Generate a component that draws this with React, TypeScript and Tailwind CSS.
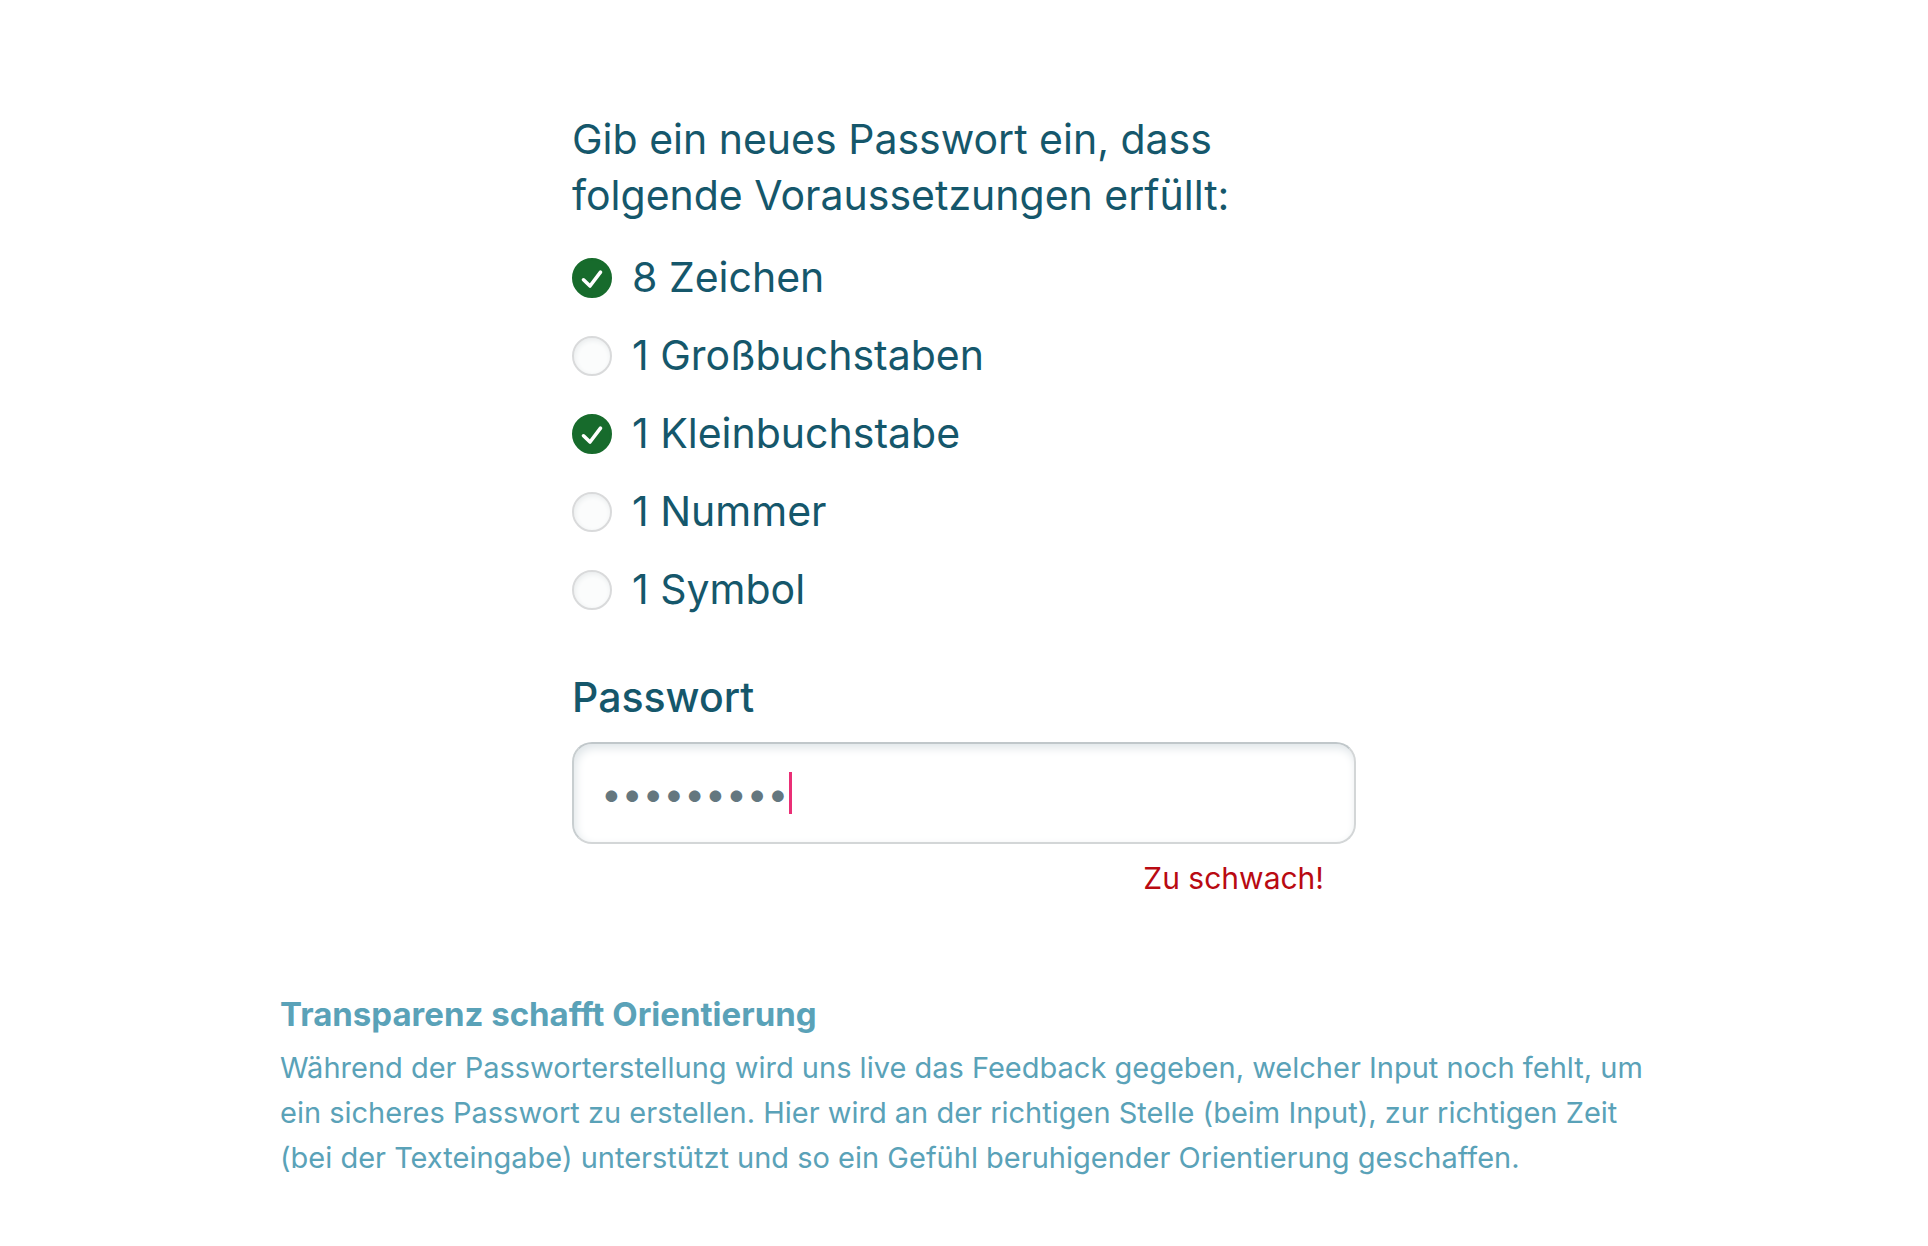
const requirements = [
  { id: 'length', label: '8 Zeichen', met: true },
  { id: 'upper', label: '1 Großbuchstaben', met: false },
  { id: 'lower', label: '1 Kleinbuchstabe', met: true },
  { id: 'number', label: '1 Nummer', met: false },
  { id: 'symbol', label: '1 Symbol', met: false },
];

function Requirement({ id, label, met }: { id: string; label: string; met: boolean }) {
  return (
    <li className="flex items-center gap-5">
      <span className="relative flex size-10 shrink-0">
        <input
          id={id}
          type="checkbox"
          checked={met}
          readOnly
          className="size-10 appearance-none rounded-full border-2 border-[#d9dadb] bg-[#fbfcfc] shadow-[inset_1px_2px_5px_#e9eced] checked:border-[#176b2c] checked:bg-[#176b2c] checked:shadow-none"
        />
        {met && (
          <svg
            viewBox="0 0 40 40"
            className="pointer-events-none absolute inset-0 size-10"
            fill="none"
            stroke="white"
            strokeWidth="3.6"
            strokeLinecap="round"
            strokeLinejoin="round"
          >
            <path d="M11.5 21.8 18 28 28.5 14.2" />
          </svg>
        )}
      </span>
      <label htmlFor={id} className="pb-0.5 text-[41px] leading-[38px]">
        {label}
      </label>
    </li>
  );
}

export default function App() {
  return (
    <main className="flex min-h-screen flex-col items-center bg-white px-8 pt-[111px] pb-16 font-['Inter',sans-serif] text-[#15576b]">
      <form className="w-full max-w-[784px]">
        <p className="text-[41px] leading-14">
          Gib ein neues Passwort ein, dass
          <br />
          folgende Voraussetzungen erfüllt:
        </p>
        <ul className="mt-[35px] flex flex-col gap-[38px]">
          {requirements.map((r) => (
            <Requirement key={r.id} {...r} />
          ))}
        </ul>
        <label htmlFor="password" className="mt-[59px] block text-[41px] leading-14 font-medium">
          Passwort
        </label>
        <div className="relative mt-[17px]">
          <input
            id="password"
            type="password"
            defaultValue="passwort8"
            aria-describedby="strength"
            className="block h-[102px] w-full rounded-[20px] border-2 border-[#d3d6d7] border-t-[#c0c7ca] border-l-[#c8ced0] bg-white px-[27px] pt-px text-[37px] text-[#64777f] caret-transparent shadow-[inset_2px_4px_10px_#dfe5e8] outline-none"
          />
          <span className="absolute top-[30px] left-[217px] h-[42px] w-[3px] bg-[#ea2f76]" />
        </div>
        <p id="strength" className="mt-3.5 pr-8 text-right text-[30px] leading-10 text-[#b90a12]">
          Zu schwach!
        </p>
      </form>
      <section className="mt-24 w-full max-w-[1368px] text-[#5aa2b8]">
        <h2 className="text-[33px] leading-10 font-bold">Transparenz schafft Orientierung</h2>
        <p className="mt-[11px] text-[29px] leading-[45px]">
          Während der Passworterstellung wird uns live das Feedback gegeben, welcher Input noch fehlt, um
          <br />
          ein sicheres Passwort zu erstellen. Hier wird an der richtigen Stelle (beim Input), zur richtigen Zeit
          <br />
          (bei der Texteingabe) unterstützt und so ein Gefühl beruhigender Orientierung geschaffen.
        </p>
      </section>
    </main>
  );
}
